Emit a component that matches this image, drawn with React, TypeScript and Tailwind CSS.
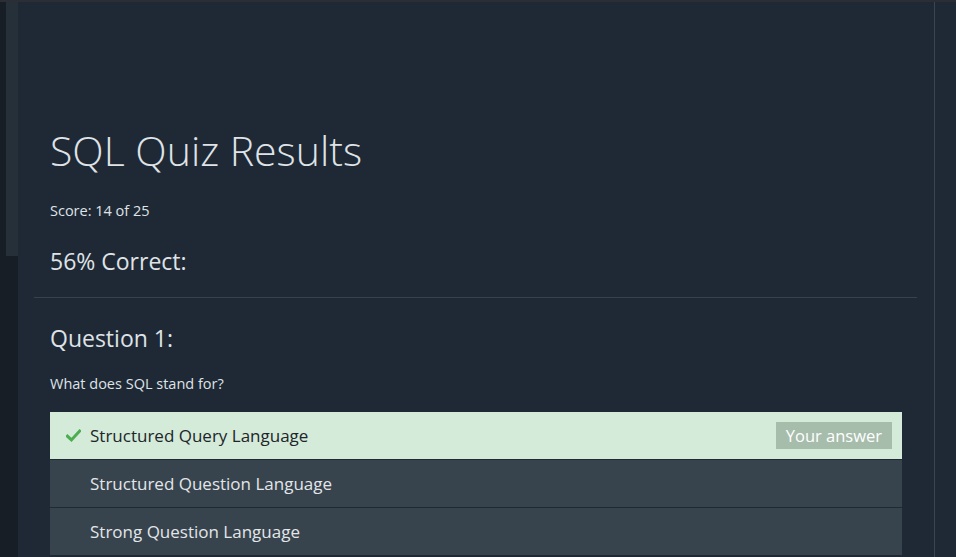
import React from 'react';

const answers = [
  { text: 'Structured Query Language', correct: true, mine: true },
  { text: 'Structured Question Language', correct: false, mine: false },
  { text: 'Strong Question Language', correct: false, mine: false },
];

const Check = () => (
  <svg width="15" height="13" viewBox="0 0 16 13" className="shrink-0">
    <path d="M1.5 7.2 L5.8 11.2 L14.5 1.8" fill="none" stroke="#4cae4f" strokeWidth="3.2" strokeLinecap="square" />
  </svg>
);

const App = () => {
  return (
    <div
      className="flex h-[557px] w-[956px] flex-col overflow-hidden bg-[#1f2935] text-[#dfe3e7]"
      style={{ fontFamily: '"Open Sans", "Noto Sans", sans-serif' }}
    >
      <div className="h-[2px] bg-[#2b2e34]" />
      <div className="flex flex-1">
        <div className="w-[18px] bg-[#171e26] pl-[6px]">
          <div className="h-[254px] bg-[#263039]" />
        </div>
        <div className="w-[917px] border-r border-[#3b4551] pl-4 pr-[17px]">
          <div className="pl-4 pr-[15px] pt-[122px]">
            <h1 className="text-[41px] font-light leading-[52px]">SQL Quiz Results</h1>
            <p className="mt-[24px] text-[14.5px] leading-[22px]">Score: 14 of 25</p>
            <h3 className="mt-[24px] text-[23px] leading-[30px]">56% Correct:</h3>
          </div>
          <hr className="mt-[21px] border-[#38424d]" />
          <div className="pl-4 pr-[15px] pt-[25px]">
            <h3 className="text-[23px] leading-[30px]">Question 1:</h3>
            <p className="mt-[20px] text-[14.5px] leading-[22px]">What does SQL stand for?</p>
            <ul className="mt-[17px] flex flex-col">
              {answers.map((a) => (
                <li
                  key={a.text}
                  className={
                    a.correct
                      ? 'flex h-[48px] items-center border-b border-[#1f2a33] bg-[#d4ebd9] pl-4 pr-[10px] text-[#212529]'
                      : 'flex h-[48px] items-center border-b border-[#1f2a33] bg-[#37434d] pl-10 pr-[10px] text-[#e3e6e9]'
                  }
                >
                  {a.correct && (
                    <span className="mr-[9px] flex w-[15px] items-center">
                      <Check />
                    </span>
                  )}
                  <span className="flex-1 text-[17px]">{a.text}</span>
                  {a.mine && (
                    <span className="bg-[#a6bdac] px-[10px] py-[2px] text-[16.5px] leading-[23px] text-white">
                      Your answer
                    </span>
                  )}
                </li>
              ))}
            </ul>
          </div>
        </div>
        <div className="flex-1" />
      </div>
    </div>
  );
};

export default App;
